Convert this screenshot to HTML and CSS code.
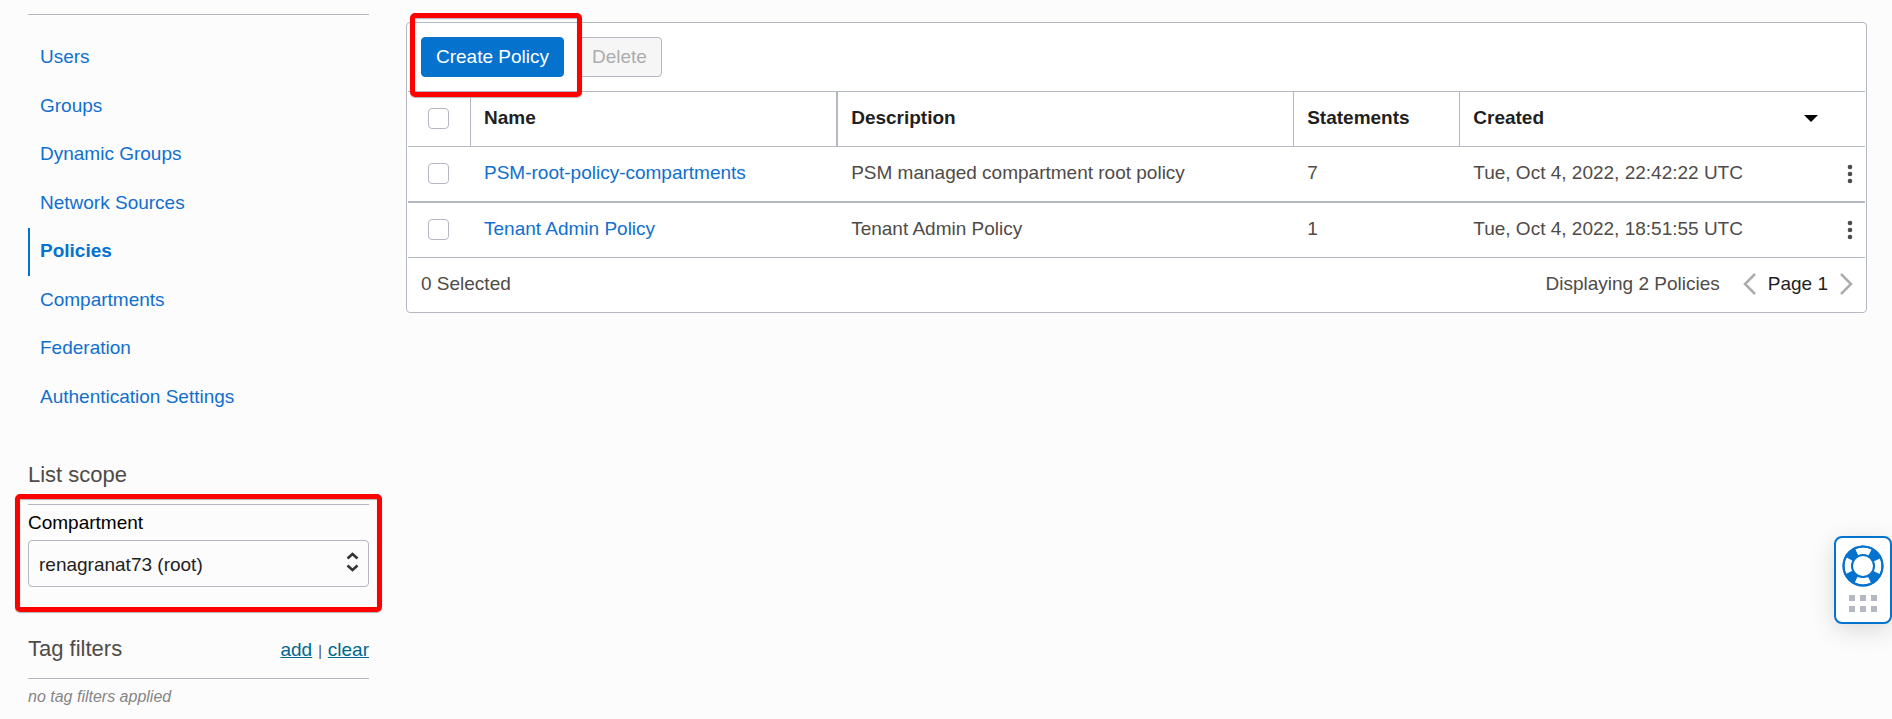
FILE: index.html
```html
<!DOCTYPE html>
<html lang="en">
<head>
<meta charset="utf-8">
<title>Policies</title>
<meta name="viewport" content="width=device-width, initial-scale=1">
<link rel="stylesheet" href="styles.css">
</head>
<body>
<div class="layout">
  <aside class="sidebar">
    <nav class="side-nav" aria-label="Identity">
      <a href="#">Users</a>
      <a href="#">Groups</a>
      <a href="#">Dynamic Groups</a>
      <a href="#">Network Sources</a>
      <a href="#" class="current" aria-current="page">Policies</a>
      <a href="#">Compartments</a>
      <a href="#">Federation</a>
      <a href="#">Authentication Settings</a>
    </nav>

    <section class="scope">
      <h2 class="side-title">List scope</h2>
      <div class="scope-field">
        <label for="compartment">Compartment</label>
        <div class="select-wrap">
          <select id="compartment"><option>renagranat73 (root)</option></select>
          <svg class="select-icon" width="13" height="20" viewBox="0 0 13 20" aria-hidden="true"><path d="M1.5 6.500 6.500 2l5 4.500M1.500 13.500l5 4.500 5-4.500"/></svg>
        </div>
        <div class="highlight highlight-scope"></div>
      </div>
    </section>

    <section class="tags">
      <div class="tags-head">
        <h2 class="side-title">Tag filters</h2>
        <div class="tags-links"><a href="#">add</a><span>|</span><a href="#">clear</a></div>
      </div>
      <p class="tags-empty">no tag filters applied</p>
    </section>
  </aside>

  <main class="panel">
    <div class="toolbar">
      <button type="button" class="btn primary">Create Policy</button>
      <button type="button" class="btn" disabled>Delete</button>
      <div class="highlight highlight-create"></div>
    </div>
    <table class="policies">
      <colgroup>
        <col class="col-check"><col class="col-name"><col class="col-desc"><col class="col-count"><col><col class="col-menu">
      </colgroup>
      <thead>
        <tr>
          <th class="check"><input type="checkbox" aria-label="Select all policies"></th>
          <th class="name">Name</th>
          <th>Description</th>
          <th>Statements</th>
          <th colspan="2" class="created"><div class="sort">Created
            <svg width="16" height="9" viewBox="0 0 16 9" aria-hidden="true"><path d="M1 1h14L8 8z"/></svg></div></th>
        </tr>
      </thead>
      <tbody>
        <tr>
          <td class="check"><input type="checkbox" aria-label="Select PSM-root-policy-compartments"></td>
          <td><a href="#">PSM-root-policy-compartments</a></td>
          <td>PSM managed compartment root policy</td>
          <td>7</td>
          <td>Tue, Oct 4, 2022, 22:42:22 UTC</td>
          <td class="menu"><button type="button" class="icon-btn" aria-label="Actions"><svg width="6" height="20" viewBox="0 0 6 20"><circle cx="3" cy="3" r="2.300"/><circle cx="3" cy="10" r="2.300"/><circle cx="3" cy="17" r="2.300"/></svg></button></td>
        </tr>
        <tr>
          <td class="check"><input type="checkbox" aria-label="Select Tenant Admin Policy"></td>
          <td><a href="#">Tenant Admin Policy</a></td>
          <td>Tenant Admin Policy</td>
          <td>1</td>
          <td>Tue, Oct 4, 2022, 18:51:55 UTC</td>
          <td class="menu"><button type="button" class="icon-btn" aria-label="Actions"><svg width="6" height="20" viewBox="0 0 6 20"><circle cx="3" cy="3" r="2.300"/><circle cx="3" cy="10" r="2.300"/><circle cx="3" cy="17" r="2.300"/></svg></button></td>
        </tr>
      </tbody>
    </table>
    <footer class="panel-foot">
      <span>0 Selected</span>
      <div class="pager">
        <span class="total">Displaying 2 Policies</span>
        <button type="button" class="icon-btn" aria-label="Previous page"><svg class="chevron" width="13" height="22" viewBox="0 0 13 22"><path d="M12 1 2 11l10 10"/></svg></button>
        <span class="page">Page 1</span>
        <button type="button" class="icon-btn" aria-label="Next page"><svg class="chevron" width="13" height="22" viewBox="0 0 13 22"><path d="m1 1 10 10L1 21"/></svg></button>
      </div>
    </footer>
  </main>
</div>

<button type="button" class="help" aria-label="Help">
  <svg width="42" height="42" viewBox="0 0 42 42" aria-hidden="true">
    <circle class="ring-fill" cx="21" cy="21" r="20.500"/>
    <circle class="ring-band" cx="21" cy="21" r="15"/>
    <circle class="ring-edge outer" cx="21" cy="21" r="19.500"/>
    <circle class="ring-edge" cx="21" cy="21" r="11"/>
  </svg>
  <svg width="28" height="18" viewBox="0 0 28 18" aria-hidden="true"><path class="grip" d="M0 0h6v6H0zM11 0h6v6h-6zM22 0h6v6h-6zM0 11h6v6H0zM11 11h6v6h-6zM22 11h6v6h-6z"/></svg>
</button>
</body>
</html>
```

FILE: styles.css
```css
:root {
  --line: #b3b8c2;
  --blue: #0572ce;
  --link: #116fce;
  --text: #4f4b48;
  --ink: #1f1f1f;
}

* {
  box-sizing: border-box;
}

body {
  margin: 0;
  background: #fcfcfc;
  color: var(--text);
  font: 19px/24px "Liberation Sans", Arial, sans-serif;
}

a {
  color: var(--link);
  text-decoration: none;
}

button,
select {
  font: inherit;
}

.layout {
  display: grid;
  grid-template-columns: 341px minmax(0, 1fr);
  gap: 37px;
  align-items: start;
  padding: 14px 25px 0 28px;
}

/* Sidebar */
.side-nav {
  display: grid;
  align-content: space-between;
  min-height: 408px;
  padding-top: 19px;
  border-top: 1px solid var(--line);
}

.side-nav a {
  padding: 11px 10px 13px;
  border-left: 2px solid transparent;
}

.side-nav .current {
  border-left-color: var(--blue);
  color: var(--blue);
  font-weight: bold;
}

.side-title {
  margin: 0;
  font-size: 22px;
  font-weight: normal;
  line-height: 28px;
}

.scope {
  margin-top: 38px;
}

.scope .side-title {
  padding: 1px 0 15px;
}

.scope-field {
  position: relative;
  padding-top: 6px;
  border-top: 1px solid var(--line);
}

.scope-field label {
  display: block;
  color: #000;
}

.select-wrap {
  position: relative;
  margin-top: 5px;
}

.select-wrap select {
  display: block;
  width: 100%;
  height: 47px;
  padding: 2px 40px 0 10px;
  border: 1px solid var(--line);
  border-radius: 4px;
  appearance: none;
  background: #fcfcfc;
  color: #222;
}

.select-icon {
  position: absolute;
  top: 12px;
  right: 10px;
  fill: none;
  stroke: #333;
  stroke-width: 2.5;
  pointer-events: none;
}

.tags {
  margin-top: 48px;
}

.tags-head {
  display: flex;
  align-items: baseline;
  justify-content: space-between;
  padding-bottom: 15px;
  border-bottom: 1px solid var(--line);
}

.tags-links {
  display: flex;
  gap: 6px;
  align-items: baseline;
}

.tags-links a {
  color: #00688c;
  text-decoration: underline;
}

.tags-links span {
  font-size: 14px;
}

.tags-empty {
  margin: 7px 0 0;
  color: #858585;
  font-size: 16px;
  font-style: italic;
  line-height: 22px;
}

/* Marker frames */
.highlight {
  position: absolute;
  border: 5px solid #fe0000;
  border-radius: 5px;
  box-shadow: 0 1px 1px #80808099, inset 0 1px 1px #80808099;
  pointer-events: none;
}

.highlight-scope {
  inset: -11px -13px -25px;
}

.highlight-create {
  top: -10px;
  bottom: -6px;
  left: 2px;
  width: 172px;
}

/* Policy list */
.panel {
  margin-top: 8px;
  padding: 0 1px;
  border: 1px solid var(--line);
  border-radius: 4px;
  background: #fff;
}

.toolbar {
  position: relative;
  display: flex;
  gap: 13px;
  padding: 14px 13px;
  border-bottom: 1px solid var(--line);
}

.btn {
  height: 40px;
  padding: 0 14px;
  border: 1px solid var(--line);
  border-radius: 4px;
  background: #f6f6f6;
  color: #adadad;
}

.btn.primary {
  border-color: var(--blue);
  background: var(--blue);
  color: #fff;
}

.policies {
  width: 100%;
  border-spacing: 0;
  table-layout: fixed;
}

.col-check {
  width: 63px;
}

.col-name {
  width: 25.2%;
}

.col-desc {
  width: 31.3%;
}

.col-count {
  width: 11.4%;
}

.col-menu {
  width: 30px;
}

.policies th,
.policies td {
  height: 55px;
  padding: 0 13px 2px;
  border-bottom: 1px solid var(--line);
  text-align: left;
}

.policies th {
  border-right: 1px solid var(--line);
  color: var(--ink);
}

.policies .name {
  border-right-width: 2px;
}

.policies .created {
  padding-right: 46px;
  border-right: 0;
}

.policies tbody tr:first-child td {
  height: 56px;
  border-bottom-width: 2px;
}

.policies .check {
  padding: 0 20px 2px;
}

.policies .menu {
  padding: 0 12px;
}

.check input {
  display: block;
  width: 21px;
  height: 21px;
  margin: 0;
  border: 1px solid var(--line);
  border-radius: 4px;
  appearance: none;
  background: #fff;
}

.sort {
  display: flex;
  align-items: center;
  justify-content: space-between;
}

.icon-btn {
  display: block;
  padding: 0;
  border: 0;
  background: none;
}

.icon-btn svg {
  display: block;
  fill: var(--text);
}

.panel-foot {
  display: flex;
  justify-content: space-between;
  align-items: center;
  padding: 14px 12px 16px 13px;
}

.pager {
  display: flex;
  align-items: center;
  gap: 12px;
}

.total {
  margin-right: 11px;
}

.page {
  color: var(--ink);
}

.icon-btn .chevron {
  fill: none;
  stroke: #acacac;
  stroke-width: 2.5;
}

/* Help tab at the window's edge */
.help {
  position: fixed;
  right: 0;
  bottom: 95px;
  display: grid;
  justify-items: center;
  gap: 8px;
  padding: 7px 6px 9px;
  border: 2px solid var(--blue);
  border-radius: 8px;
  background: #fff;
  box-shadow: 0 6px 24px #00000024;
}

.help svg {
  display: block;
}

.ring-fill {
  fill: var(--blue);
}

/* Four white segments between the blue diagonals */
.ring-band {
  fill: none;
  stroke: #fff;
  stroke-width: 7;
  stroke-dasharray: 13.562 10;
  stroke-dashoffset: 6.781;
}

.ring-edge {
  fill: #fff;
  stroke: var(--blue);
  stroke-width: 2;
}

.ring-edge.outer {
  fill: none;
}

.grip {
  fill: #b3b8c2;
}
```
